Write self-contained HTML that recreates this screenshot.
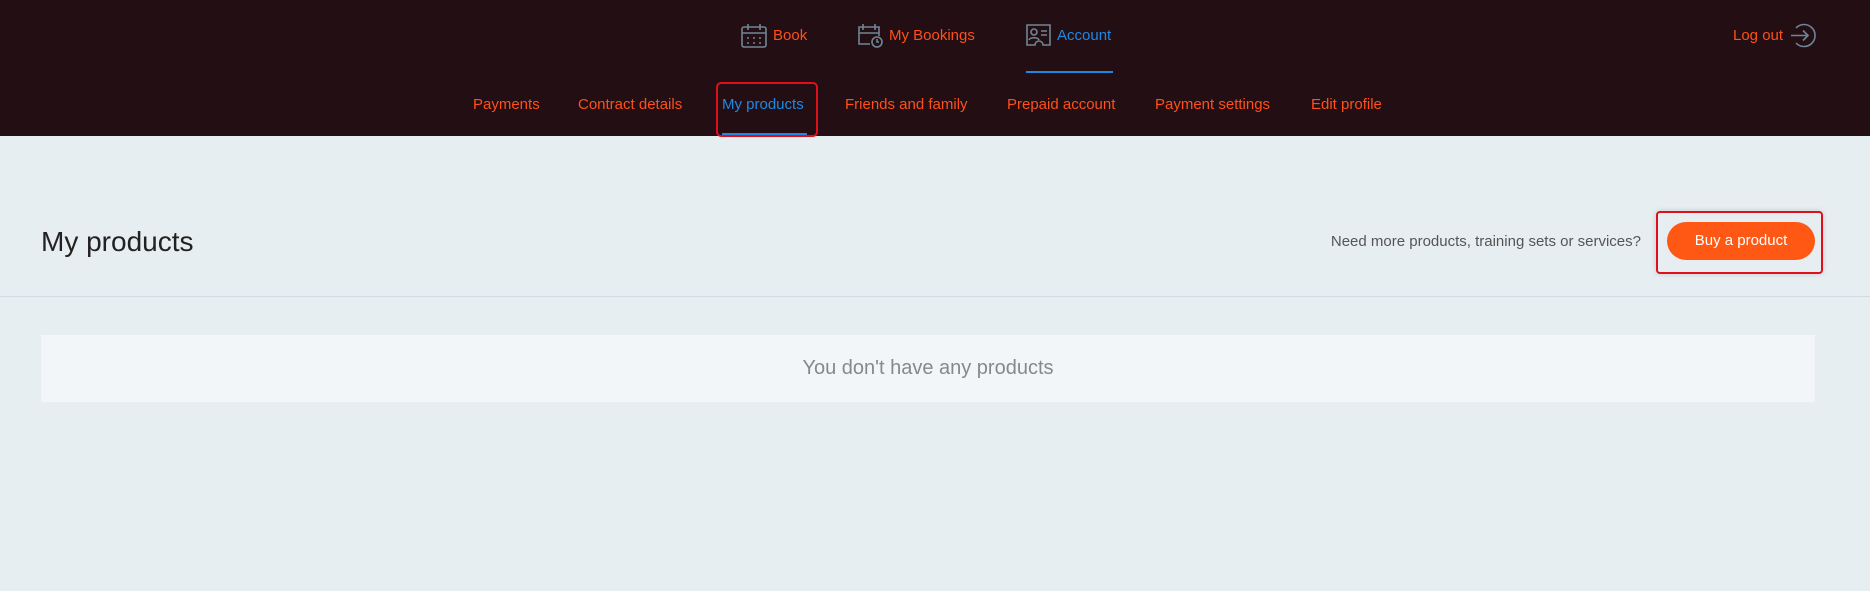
<!DOCTYPE html>
<html><head><meta charset="utf-8"><style>
*{margin:0;padding:0;box-sizing:border-box}
body{width:1870px;height:591px;background:#e7eef1;font-family:"Liberation Sans",Arial,sans-serif;position:relative;overflow:hidden}
.hdr{position:absolute;left:0;top:0;width:1870px;height:136px;background:#230f13}
.a{position:absolute;color:#ff4f1a;font-size:15px;white-space:nowrap;line-height:20px}
.b{color:#1e88e5}
svg{position:absolute}
</style></head><body>
<div class="hdr">
<svg style="left:741px;top:23px" width="26" height="25" viewBox="0 0 26 25" fill="none" stroke="#6f8594" stroke-width="1.6"><rect x="1" y="4" width="24" height="20" rx="2"/><path d="M1 10h24M7 1v6M19 1v6"/><g fill="#6f8594" stroke="none"><circle cx="7" cy="15" r="1"/><circle cx="13" cy="15" r="1"/><circle cx="19" cy="15" r="1"/><circle cx="7" cy="20" r="1"/><circle cx="13" cy="20" r="1"/><circle cx="19" cy="20" r="1"/></g></svg>
<div class="a" style="left:773px;top:26px">Book</div>
<svg style="left:857px;top:23px" width="27" height="25" viewBox="0 0 27 25" fill="none" stroke="#6f8594" stroke-width="1.6"><path d="M13 21H2V4h20v9M2 10h20M6 1v6M18 1v6"/><circle cx="20" cy="19" r="5"/><path d="M20 16v3h2"/></svg>
<div class="a" style="left:889px;top:26px">My Bookings</div>
<svg style="left:1026px;top:24px" width="25" height="22" viewBox="0 0 25 22" fill="none" stroke="#6f8594" stroke-width="1.6"><path d="M1 1h23v20h-7a4 4 0 0 0-8 0H1z"/><circle cx="8" cy="8" r="3"/><path d="M3 16c1-3 9-3 10 0M15 7h6M15 11h6"/></svg>
<div class="a b" style="left:1057px;top:26px">Account</div>
<div style="position:absolute;left:1026px;top:71px;width:87px;height:2px;background:#1e88e5"></div>
<div class="a" style="left:1733px;top:26px">Log out</div>
<svg style="left:1790px;top:23px" width="26" height="25" viewBox="0 0 26 25" fill="none" stroke="#6f8594" stroke-width="1.6"><path d="M6 5A11 11 0 1 1 6 20"/><path d="M1 12.5h17M13 7.5l5 5-5 5"/></svg>

<div class="a" style="left:473px;top:95px">Payments</div>
<div class="a" style="left:578px;top:95px">Contract details</div>
<div class="a b" style="left:722px;top:95px">My products</div>
<div style="position:absolute;left:722px;top:133px;width:85px;height:3px;background:#1e88e5"></div>
<div style="position:absolute;left:716px;top:82px;width:102px;height:55px;border:2px solid #e0101a;border-radius:5px"></div>
<div class="a" style="left:845px;top:95px">Friends and family</div>
<div class="a" style="left:1007px;top:95px">Prepaid account</div>
<div class="a" style="left:1155px;top:95px">Payment settings</div>
<div class="a" style="left:1311px;top:95px">Edit profile</div>
</div>
<div style="position:absolute;left:41px;top:224px;font-size:28px;color:#222;line-height:36px">My products</div>
<div style="position:absolute;right:229px;top:232px;font-size:15px;color:#555;line-height:20px">Need more products, training sets or services?</div>
<div style="position:absolute;left:1656px;top:211px;width:167px;height:63px;border:2px solid #e0101a;border-radius:4px;box-shadow:0 0 6px rgba(0,0,0,.15)"></div>
<div style="position:absolute;left:1667px;top:222px;width:148px;height:38px;border-radius:19px;background:#ff5714;color:#fff;font-size:15px;text-align:center;line-height:38px">Buy a product</div>
<div style="position:absolute;left:0;top:296px;width:1870px;height:1px;background:#d3dbe0"></div>
<div style="position:absolute;left:41px;top:335px;width:1774px;height:67px;background:#f3f6f8;color:#888;font-size:20px;text-align:center;line-height:67px">You don't have any products</div>
</body></html>
